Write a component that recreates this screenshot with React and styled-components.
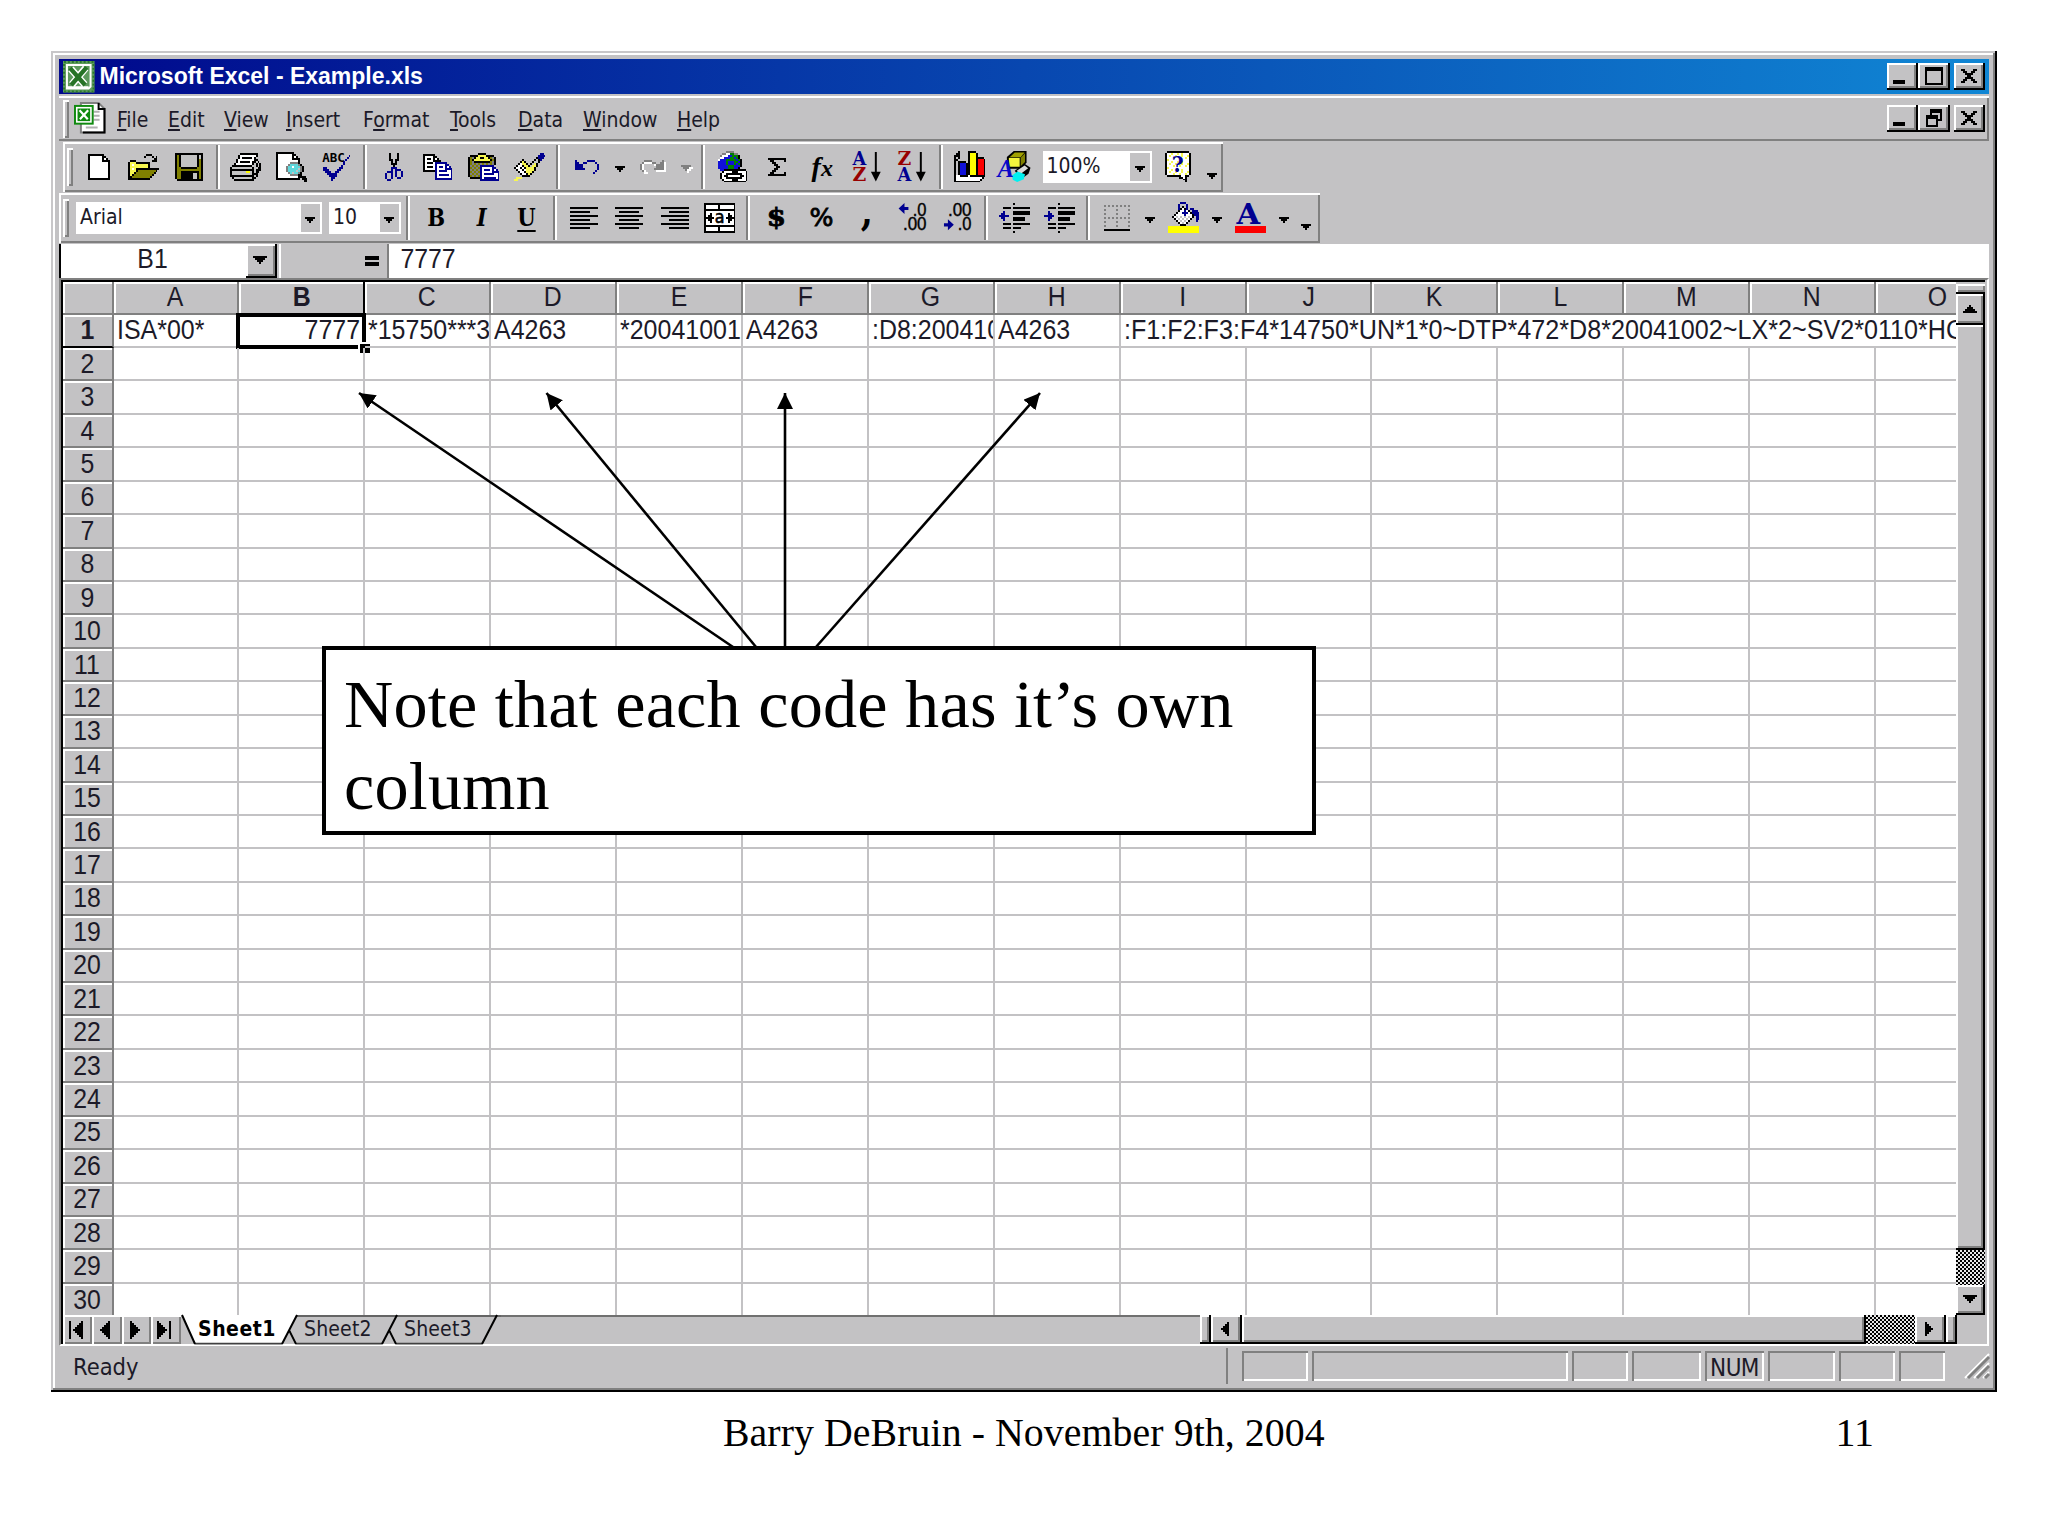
import styled, { createGlobalStyle, css } from 'styled-components';

const PX = 1.967;
const COL = 125.9;
const ROW = 33.43;

const colors = {
    k: '#000000',
    w: '#ffffff',
    y: '#f6f650',
    Y: '#ffff00',
    o: '#808000',
    b: '#000090',
    B: '#1010d8',
    g: '#008000',
    c: '#5fd8dc',
    R: '#fc0000',
    s: '#c3c3c3',
    d: '#808080',
};

const art = {
    blank: [
        'kkkkkkkk...',
        'kwwwwwwkk..',
        'kwwwwwwkwk.',
        'kwwwwwwkkkk',
        'kwwwwwwwwwk',
        'kwwwwwwwwwk',
        'kwwwwwwwwwk',
        'kwwwwwwwwwk',
        'kwwwwwwwwwk',
        'kwwwwwwwwwk',
        'kwwwwwwwwwk',
        'kwwwwwwwwwk',
        'kkkkkkkkkkk',
    ],
    open: [
        '.........kkk....',
        '........k...k.k.',
        '.............kk.',
        '.kkk........kkk.',
        'kyyykkkkkkk.....',
        'kywyyyyyyyk.....',
        'kyyyyyyyyyk.....',
        'kywykkkkkkkkkkkk',
        'kyyykoooooooook.',
        'kyykoooooooook..',
        'kykoooooooook...',
        'kkoooooooook....',
        'kkkkkkkkkkk.....',
    ],
    save: [
        'kkkkkkkkkkkkkk',
        'kokssssssssksk',
        'kokssssssssksk',
        'koksssssssskok',
        'koksssssssskok',
        'koksssssssskok',
        'koksssssssskok',
        'kookkkkkkkkook',
        'kooooooooooook',
        'kookkkkkkkkkok',
        'kookkkkkksskok',
        'kookkkkkksskok',
        'kookkkkkksskok',
        '.kkkkkkkkkkkkk',
    ],
    print: [
        '.....kkkkkkkkk..',
        '....kwwwwwwwwk..',
        '....kwkkkkkwk...',
        '...kwwwwwwwwkk..',
        '...kwkkkkkwkksk.',
        '..kwwwwwwwwksksk',
        '.kkkkkkkkkkssksk',
        'kssssssssssksskk',
        'kkkkkkkkkkkkskkk',
        'ksssssssYYskskk.',
        'ksssssssssskkk..',
        'kkkkkkkkkkkksk..',
        '.kssssssssskk...',
        '..kkkkkkkkkk....',
    ],
    preview: [
        'kkkkkkkkk.......',
        'kwwwwwwwkk......',
        'kwwwwwwwkwk.....',
        'kwwwwwwwkkkk....',
        'kwwwwwwwwwwk....',
        'kwwwwwwddddk....',
        'kwwwwwdccccdk...',
        'kwwwwdccwcccdk..',
        'kwwwwdcccccsdk..',
        'kwwwwdccccscdk..',
        'kwwwwwdcsccdk...',
        'kwwwwwwddddkk...',
        'kwwwwwwwwwwkkkk.',
        'kkkkkkkkkkkk.kkk',
        '..............kk',
    ],
    spell: [
        '................',
        '..............b.',
        '.............b..',
        '............b...',
        '...........b....',
        '...........b....',
        '..........b.....',
        '.bb......bb.....',
        '.bbb....bb......',
        '..bbb..bb.......',
        '...bbbbb........',
        '....bbbb........',
        '.....bb.........',
        '.....b..........',
    ],
    cut: [
        '..k...k..',
        '..k...k..',
        '..k...k..',
        '..kk.kk..',
        '...k.k...',
        '...kkk...',
        '....k....',
        '...bbb...',
        '...b.bbb.',
        '.bbb.b..b',
        'b..b.b..b',
        'b..b.b..b',
        'b..b..bb.',
        '.bb......',
    ],
    copy: [
        'kkkkkk..........',
        'kwwwwkk.........',
        'kwkkwkwk........',
        'kwwwwkkkk.......',
        'kwkkkwbbbbbb....',
        'kwwwwwbwwwwbb...',
        'kwkkkwbwbbwbwb..',
        'kwwwwwbwwwwbbbb.',
        'kkkkkkbwbbbbwwb.',
        '......bwwwwwwwb.',
        '......bwbbbbbwb.',
        '......bwwwwwwwb.',
        '......bbbbbbbbb.',
    ],
    paste: [
        '.....kkkk.......',
        '.kkkkyyyykkkk...',
        'kodkyykkyykodk..',
        'kokyyyyyyyykok..',
        'kodkkkkkkkkodk..',
        'kododododododk..',
        'kdododbbbbbbb...',
        'kododobwwwwwbb..',
        'kdododbwbbbwbwb.',
        'kododobwwwwwbbbb',
        'kdododbwbbbbbwwb',
        'kododobwwwwwwwwb',
        '.kkkkkbwbbbbbbwb',
        '......bbbbbbbbbb',
    ],
    brush: [
        '.............bb.',
        '............bbbb',
        '...........kbbb.',
        '....k.....kskb..',
        '...kyk...kssk...',
        '..kwyyk.ksyk....',
        '.kwwkyyksyyk....',
        'kwwkwkyyyyk.....',
        '.kwwkwyyyyk.....',
        '..kwwkyyyk......',
        '...kwwkyk.......',
        '....kkkk........',
        '.yyy............',
        'yy..............',
    ],
    undo: [
        'b.....bbbb..',
        'bb..bb....b.',
        'bbbb.......b',
        'bbbb.......b',
        'bbbbb......b',
        '..........b.',
        '.........b..',
    ],
    redo: [
        '..dddd.....d.',
        '.dwwwwdd..ddw',
        'dw.....wddddw',
        'dw......ddddw',
        'dw.....dddddw',
        '.dw.....wwwww',
        '..ww.........',
    ],
    link: [
        '.....dddd.......',
        '...ddwwggdd.....',
        '..dwwwBBgggk....',
        '..wwBBBggBgk....',
        '.wBBBgggggBgk...',
        '.BBBBgBBBggBk...',
        '.BBBBgBBBgBgk...',
        '.BBBBBgggBBBk...',
        '.BBBBBgggBBk....',
        '..BBkkkkkkkkkkk.',
        '...kwwwwkkkwwwwk',
        '..kwwkkkkkkkkwwk',
        '..kwkkwwwwwwkkwk',
        '..kwwkkkkkkkkwwk',
        '...kwwwwkkkwwwwk',
        '....kkkkkkkkkkk.',
    ],
    sum: [
        'kkkkkkkkk',
        '.kk.....k',
        '..kk.....',
        '...kk....',
        '....kk...',
        '...kk....',
        '..kk.....',
        '.kk.....k',
        'kkkkkkkkk',
    ],
    chart: [
        '..k....kkkk.....',
        '.kk....kYYYk....',
        'kkk....kYYYk....',
        'k.k....kYYYkkkk.',
        'kk.....kYYYkRRRk',
        'k.kkkk.kYYYkRRRk',
        'k.kBBBkkYYYkRRRk',
        'k.kBBBkkYYYkRRRk',
        'k.kBBBkkYYYkRRRk',
        'k.kBBBkkYYYkRRRk',
        'k.kBBBkkYYYkRRRk',
        'k.kBBBkkYYYkRRRk',
        'kwwkkkkwkkkkkkkk',
        'kwwwwwwwwwwwwwk.',
        'kwwwwwwwwwwwwk..',
        'kkkkkkkkkkkkk...',
    ],
    help: [
        '.kkkkkkkkkkk.',
        'kwwywwywywwwk',
        'kwywwywwywwyk',
        'kwwwywwywwywk',
        'kywwwwwwwwwwk',
        'kwwywwywywwwk',
        'kwywwywwywwyk',
        'kwwwywwywwywk',
        'kywwwwwwwwwwk',
        'kwwywwywywwwk',
        'kwywwywwywwyk',
        'kwwwywwywwywk',
        '.kkkkkkkwwkk.',
        '.......kkwk..',
        '.........kk..',
        '..........k..',
    ],
    left: ['kkkkkkkkkkkkkk', '', 'kkkkkkkkkk', '', 'kkkkkkkkkkkkkk', '', 'kkkkkkkkkk', '', 'kkkkkkkkkkkkkk', '', 'kkkkkkkkkk'],
    center: ['kkkkkkkkkkkkkk', '', '..kkkkkkkkkk', '', 'kkkkkkkkkkkkkk', '', '..kkkkkkkkkk', '', 'kkkkkkkkkkkkkk', '', '..kkkkkkkkkk'],
    right: ['kkkkkkkkkkkkkk', '', '....kkkkkkkkkk', '', 'kkkkkkkkkkkkkk', '', '....kkkkkkkkkk', '', 'kkkkkkkkkkkkkk', '', '....kkkkkkkkkk'],
    merge: [
        'kkkkkkkkkkkkkkkk',
        'kwwwwwwkwwwwwwwk',
        'kwwwwwwkwwwwwwwk',
        'kkkkkkkkkkkkkkkk',
        'kwwwwwwwwwwwwwwk',
        'kwwkwwwwwwwwkwwk',
        'kwkkwwwwwwwwkkwk',
        'kkkkkwwwwwwkkkkk',
        'kwkkwwwwwwwwkkwk',
        'kwwkwwwwwwwwkwwk',
        'kwwwwwwwwwwwwwwk',
        'kkkkkkkkkkkkkkkk',
        'kwwwwwwkwwwwwwwk',
        'kwwwwwwkwwwwwwwk',
        'kkkkkkkkkkkkkkkk',
    ],
    outdent: [
        '.......k........',
        '................',
        '..kkkk.kkkkkkkkk',
        '................',
        '..b....kkkkkkkkk',
        '.bb....kkkkkkkkk',
        'bbbbb...........',
        '.bb....kkkkkk...',
        '..b....kkkkkk...',
        '................',
        '..kkkk.kkkkkkkkk',
        '................',
        '..kkkk.kkkk.....',
        '................',
        '.......k........',
    ],
    indent: [
        '.......k........',
        '................',
        '..kkkk.kkkkkkkkk',
        '................',
        '..b....kkkkkkkkk',
        '..bb...kkkkkkkkk',
        'bbbbb...........',
        '..bb...kkkkkk...',
        '..b....kkkkkk...',
        '................',
        '..kkkk.kkkkkkkkk',
        '................',
        '..kkkk.kkkk.....',
        '................',
        '.......k........',
    ],
    borders: [
        'd.d.d.d.d.d.d',
        '.............',
        'd.....d.....d',
        '.............',
        'd.....d.....d',
        '.............',
        'd.d.d.d.d.d.d',
        '.............',
        'd.....d.....d',
        '.............',
        'd.....d.....d',
        '.............',
        'kkkkkkkkkkkkk',
    ],
    fill: [
        '......bbb.......',
        '.....b...b......',
        '.....b.k.b......',
        '.....bkwkb.bb...',
        '.....kwwbwk.bbb.',
        '....kwwbbbwkbbbb',
        '...kwwwwbwwwkbbb',
        '..kwswswswswk.bb',
        '...kwswswswk..bb',
        '....kwswswk...b.',
        '.....kwswk......',
        '......kkk.......',
        'YYYYYYYYYYYYYYYY',
        'YYYYYYYYYYYYYYYY',
        'YYYYYYYYYYYYYYYY',
        'YYYYYYYYYYYYYYYY',
    ],
    fontColor: [
        '................',
        '................',
        '................',
        '................',
        '................',
        '................',
        '................',
        '................',
        '................',
        '................',
        '................',
        '................',
        'RRRRRRRRRRRRRRRR',
        'RRRRRRRRRRRRRRRR',
        'RRRRRRRRRRRRRRRR',
        'RRRRRRRRRRRRRRRR',
    ],
    down: ['kkkkk', '.kkk.', '..k..'],
    downOff: ['ddddd.', '.dddww', '..dww.', '...w..'],
    bigDown: ['kkkkkkk', '.kkkkk.', '..kkk..', '...k...'],
    bigUp: ['...k...', '..kkk..', '.kkkkk.', 'kkkkkkk'],
    prev: ['...k', '..kk', '.kkk', 'kkkk', '.kkk', '..kk', '...k'],
    next: ['k...', 'kk..', 'kkk.', 'kkkk', 'kkk.', 'kk..', 'k...'],
    tabFirst: ['k.....k', 'k....kk', 'k...kkk', 'k..kkkk', 'k.kkkkk', 'k..kkkk', 'k...kkk', 'k....kk', 'k.....k'],
    tabPrev: ['....k', '...kk', '..kkk', '.kkkk', 'kkkkk', '.kkkk', '..kkk', '...kk', '....k'],
    tabNext: ['k....', 'kk...', 'kkk..', 'kkkk.', 'kkkkk', 'kkkk.', 'kkk..', 'kk...', 'k....'],
    tabLast: ['k.....k', 'kk....k', 'kkk...k', 'kkkk..k', 'kkkkk.k', 'kkkk..k', 'kkk...k', 'kk....k', 'k.....k'],
    minimize: ['.........', '', '', '', '', '', 'kkkkkk', 'kkkkkk'],
    maximize: ['kkkkkkkkk', 'kkkkkkkkk', 'k.......k', 'k.......k', 'k.......k', 'k.......k', 'k.......k', 'k.......k', 'kkkkkkkkk'],
    restore: ['..kkkkkk', '..kkkkkk', '..k....k', 'kkkkkk.k', 'kkkkkk.k', 'k....kkk', 'k....k..', 'k....k..', 'kkkkkk..'],
    close: ['kk....kk', '.kk..kk.', '..kkkk..', '...kk...', '..kkkk..', '.kk..kk.', 'kk....kk'],
};

function Pixels({ name, children }) {
    const rows = art[name];
    const w = rows[0].length;
    const h = rows.length;
    const rects = [];
    rows.forEach((row, y) => {
        let x = 0;
        while (x < row.length) {
            let end = x + 1;
            while (end < row.length && row[end] === row[x]) end++;
            if (row[x] !== '.') {
                rects.push(<rect key={`${x}-${y}`} x={x} y={y} width={end - x} height={1} fill={colors[row[x]]} />);
            }
            x = end;
        }
    });
    return (
        <Svg width={w * PX} height={h * PX} viewBox={`0 0 ${w} ${h}`}>
            <g shapeRendering="crispEdges">{rects}</g>
            {children}
        </Svg>
    );
}

function SortIcon({ first, second }) {
    const tone = { A: '#000090', Z: '#980000' };
    return (
        <Svg width={31.5} height={31.5} viewBox="0 0 16 16">
            <g fontSize="9" fontWeight="700" fontFamily="DejaVu Serif, serif">
                <text x="0.3" y="7" textLength="7" lengthAdjust="spacingAndGlyphs" fill={tone[first]}>{first}</text>
                <text x="0.3" y="15.2" textLength="7" lengthAdjust="spacingAndGlyphs" fill={tone[second]}>{second}</text>
            </g>
            <path d="M11.6 0.5h1v10h2l-2.5 5l-2.5-5h2z" fill="#000" />
        </Svg>
    );
}

function DecimalIcon({ top, bottom, add }) {
    return (
        <Svg width={31.5} height={31.5} viewBox="0 0 16 16">
            <g fontSize="9.4" fontFamily="Liberation Sans, sans-serif" fill="#000" stroke="#000" strokeWidth="0.2">
                <text x="15" y="7" textAnchor="end" textLength={add ? 7 : 12} lengthAdjust="spacingAndGlyphs">{top}</text>
                <text x="15" y="14.4" textAnchor="end" textLength={add ? 12 : 7} lengthAdjust="spacingAndGlyphs">{bottom}</text>
            </g>
            {add
                ? <path d="M0.8 3.3l3-2.8v2h2v1.6h-2v2z" fill="#000090" />
                : <path d="M6 11.6l-3-2.8v2h-2v1.6h2v2z" fill="#000090" />}
        </Svg>
    );
}

function DrawingIcon() {
    return (
        <Svg width={31.5} height={31.5} viewBox="0 0 16 16">
            <path d="M4 3l3.5-3H14v6l-3 3H4z" fill="#000" />
            <path d="M5.4 3.2l2.6-2.4h5l-2 2.4z" fill="#a0a000" />
            <path d="M5 3.5h5.5v4.5H5z" fill="#f4f43c" />
            <path d="M11 3.4l2.2-2.2v4.4L11 7.8z" fill="#808000" />
            <path d="M8 10l5-3.5 3 2-1 3-4 3z" fill="#000" />
            <path d="M9 10l4-2.6 1.8 1.4-4 3z" fill="#d8d8d8" />
            <path d="M6.6 12.4l2.8-2 3.8 1.4-.6 2.6-3.4 1.4-2.2-1.2z" fill="#00f0f0" />
            <text x="-0.8" y="13" fontSize="12.5" fontWeight="700" fontStyle="italic" fontFamily="Liberation Serif, serif" fill="#0808c8">A</text>
        </Svg>
    );
}

function ExcelIcon() {
    return (
        <Svg width={31.5} height={31.5} viewBox="0 0 16 16">
            <rect width="16" height="16" fill="#5d9a5d" />
            <rect x="0.5" y="0.5" width="15" height="15" fill="none" stroke="#2c7a2c" strokeDasharray="1 1" />
            <path d="M2 2h12v11l-1 1H2z" fill="none" stroke="#fff" strokeWidth="1" />
            <path d="M2 13.5h11" stroke="#fff" strokeWidth="1.4" />
            <path d="M4 4l7 8M11.5 3.5L4.5 12" stroke="#fff" strokeWidth="3.6" />
            <path d="M3.6 3.6l7.6 8.6M12 3.2L4.2 12.2" stroke="#267326" strokeWidth="2.2" />
        </Svg>
    );
}

function BookIcon() {
    return (
        <Svg width={31.5} height={31.5} viewBox="0 0 16 16">
            <path d="M3.5 0.5h9l3 3v12h-12z" fill="#fff" stroke="#808080" />
            <path d="M12.5 0.5v3h3v12h-11" fill="none" stroke="#000" />
            <path d="M10 5h3M10 7h3M10 9h3M6 13h6" stroke="#b0b0b0" />
            <rect x="0" y="1.5" width="10" height="10" fill="#108a10" />
            <rect x="1" y="2.5" width="8" height="8" fill="#fff" />
            <rect x="1.8" y="3.3" width="6.4" height="6.4" fill="#108a10" />
            <path d="M2.8 4.2l4.2 4.6M7.2 4.2L3 8.8" stroke="#fff" strokeWidth="1.1" />
        </Svg>
    );
}

const menus = [
    { key: 'F', rest: 'ile', width: 51 },
    { key: 'E', rest: 'dit', width: 56 },
    { key: 'V', rest: 'iew', width: 62 },
    { key: 'I', rest: 'nsert', width: 77 },
    { pre: 'F', key: 'o', rest: 'rmat', width: 87 },
    { key: 'T', rest: 'ools', width: 68 },
    { key: 'D', rest: 'ata', width: 65 },
    { key: 'W', rest: 'indow', width: 94 },
    { key: 'H', rest: 'elp', width: 50 },
];

const columns = 'ABCDEFGHIJKLMNO'.split('');
const rowNumbers = Array.from({ length: 30 }, (_, i) => i + 1);

const firstRow = [
    { text: 'ISA*00*' },
    { text: '7777', align: 'right' },
    { text: '*15750***3' },
    { text: 'A4263' },
    { text: '*20041001' },
    { text: 'A4263' },
    { text: ':D8:200410' },
    { text: 'A4263' },
    { text: ':F1:F2:F3:F4*14750*UN*1*0~DTP*472*D8*20041002~LX*2~SV2*0110*HC', span: 7 },
];

const statusPanes = [
    { width: 66 },
    { width: 256 },
    { width: 56 },
    { width: 69 },
    { width: 59, label: 'NUM' },
    { width: 67 },
    { width: 56 },
    { width: 46 },
];

const arrows = [
    { from: [733, 647], to: [359, 393] },
    { from: [756, 647], to: [546.5, 393] },
    { from: [785, 647], to: [785, 393] },
    { from: [816, 647], to: [1040, 393] },
];

export default function App() {
    return (
        <Slide>
            <GlobalStyle />
            <Window>
                <TitleBar>
                    <ExcelIcon />
                    <Title>Microsoft Excel - Example.xls</Title>
                    <Caption>
                        <CaptionButton $low><Pixels name="minimize" /></CaptionButton>
                        <CaptionButton><Pixels name="maximize" /></CaptionButton>
                        <CaptionButton $gap><Pixels name="close" /></CaptionButton>
                    </Caption>
                </TitleBar>
                <MenuBar>
                    <Grip />
                    <MenuIcon><BookIcon /></MenuIcon>
                    {menus.map((m) => (
                        <MenuItem key={m.key} $width={m.width}>{m.pre}<u>{m.key}</u>{m.rest}</MenuItem>
                    ))}
                    <Caption>
                        <CaptionButton $low><Pixels name="minimize" /></CaptionButton>
                        <CaptionButton><Pixels name="restore" /></CaptionButton>
                        <CaptionButton $gap><Pixels name="close" /></CaptionButton>
                    </Caption>
                </MenuBar>

                <Toolbar $indent={4} $width={1160}>
                    <Grip $gap={3} />
                    <Tool><Pixels name="blank" /></Tool>
                    <Tool><Pixels name="open" /></Tool>
                    <Tool><Pixels name="save" /></Tool>
                    <Separator />
                    <Tool><Pixels name="print" /></Tool>
                    <Tool><Pixels name="preview" /></Tool>
                    <Tool>
                        <Pixels name="spell">
                            <text x="0.6" y="4.6" fontSize="6" fontWeight="700" fontFamily="DejaVu Sans Mono, monospace" textLength="11.5" lengthAdjust="spacingAndGlyphs">ABC</text>
                        </Pixels>
                    </Tool>
                    <Separator />
                    <Tool><Pixels name="cut" /></Tool>
                    <Tool><Pixels name="copy" /></Tool>
                    <Tool><Pixels name="paste" /></Tool>
                    <Tool><Pixels name="brush" /></Tool>
                    <Separator />
                    <Tool><Pixels name="undo" /></Tool>
                    <Drop><Pixels name="down" /></Drop>
                    <Tool><Pixels name="redo" /></Tool>
                    <Drop><Pixels name="downOff" /></Drop>
                    <Separator />
                    <Tool><Pixels name="link" /></Tool>
                    <Tool><Pixels name="sum" /></Tool>
                    <Tool><Fx>f<small>x</small></Fx></Tool>
                    <Tool><SortIcon first="A" second="Z" /></Tool>
                    <Tool><SortIcon first="Z" second="A" /></Tool>
                    <Separator />
                    <Tool><Pixels name="chart" /></Tool>
                    <Tool><DrawingIcon /></Tool>
                    <Combo $width={109} $left={5} $right={4}>
                        <span>100%</span>
                        <ComboButton><Pixels name="down" /></ComboButton>
                    </Combo>
                    <Tool>
                        <Pixels name="help">
                            <text x="6.5" y="10.8" textAnchor="middle" fontSize="11.5" fontWeight="700" fontFamily="DejaVu Serif, serif" fill="#000090">?</text>
                        </Pixels>
                    </Tool>
                    <Drop $more><Pixels name="down" /></Drop>
                </Toolbar>

                <Toolbar $width={1261}>
                    <Grip $gap={7} />
                    <Combo $width={246}>
                        <span>Arial</span>
                        <ComboButton><Pixels name="down" /></ComboButton>
                    </Combo>
                    <Combo $width={72} $left={7} $right={1}>
                        <span>10</span>
                        <ComboButton><Pixels name="down" /></ComboButton>
                    </Combo>
                    <Separator />
                    <Tool><Letter>B</Letter></Tool>
                    <Tool><Letter $italic>I</Letter></Tool>
                    <Tool><Letter $line>U</Letter></Tool>
                    <Separator />
                    <Tool><Pixels name="left" /></Tool>
                    <Tool><Pixels name="center" /></Tool>
                    <Tool><Pixels name="right" /></Tool>
                    <Tool>
                        <Pixels name="merge">
                            <text x="8" y="10.3" textAnchor="middle" fontSize="9" fontFamily="DejaVu Sans, sans-serif" stroke="#000" strokeWidth="0.3">a</text>
                        </Pixels>
                    </Tool>
                    <Separator />
                    <Tool><Letter $wide>$</Letter></Tool>
                    <Tool><Letter $percent>%</Letter></Tool>
                    <Tool><Letter $big>,</Letter></Tool>
                    <Tool><DecimalIcon top=".0" bottom=".00" add /></Tool>
                    <Tool><DecimalIcon top=".00" bottom=".0" /></Tool>
                    <Separator />
                    <Tool><Pixels name="outdent" /></Tool>
                    <Tool><Pixels name="indent" /></Tool>
                    <Separator />
                    <Tool><Pixels name="borders" /></Tool>
                    <Drop><Pixels name="down" /></Drop>
                    <Tool><Pixels name="fill" /></Tool>
                    <Drop><Pixels name="down" /></Drop>
                    <Tool>
                        <Pixels name="fontColor">
                            <text x="6.8" y="11" textAnchor="middle" fontSize="14.5" fontWeight="700" fontFamily="DejaVu Serif, serif" textLength="12" lengthAdjust="spacingAndGlyphs" fill="#000090">A</text>
                        </Pixels>
                    </Tool>
                    <Drop><Pixels name="down" /></Drop>
                    <Drop $more><Pixels name="down" /></Drop>
                </Toolbar>

                <FormulaBar>
                    <NameBox><Narrow>B1</Narrow></NameBox>
                    <NameButton><Pixels name="bigDown" /></NameButton>
                    <FormulaGap><EqualSign /></FormulaGap>
                    <FormulaText><Narrow>7777</Narrow></FormulaText>
                </FormulaBar>

                <Workbook>
                    <SheetArea>
                        <Sheet>
                            <Row $head>
                                <RowHead />
                                {columns.map((c) => (
                                    <ColHead key={c} $active={c === 'B'}><Narrow>{c}</Narrow></ColHead>
                                ))}
                            </Row>
                            {rowNumbers.map((n) => (
                                <Row key={n}>
                                    <RowHead $active={n === 1}><Narrow>{n}</Narrow></RowHead>
                                    {n === 1
                                        ? firstRow.map((cell, idx) => (
                                            <Cell key={idx} $span={cell.span} $align={cell.align}>
                                                <Clip>
                                                    <Narrow $origin={cell.align || 'left'} $scale={cell.span ? 0.931 : 0.925}>{cell.text}</Narrow>
                                                </Clip>
                                                {idx === 1 && <Selection><Handle /></Selection>}
                                            </Cell>
                                        ))
                                        : columns.map((c) => <Cell key={c} />)}
                                </Row>
                            ))}
                        </Sheet>
                        <VScroll>
                            <SplitBox />
                            <ScrollButton $h={31}><Pixels name="bigUp" /></ScrollButton>
                            <Thumb />
                            <Track $h={35} />
                            <ScrollButton $h={30}><Pixels name="bigDown" /></ScrollButton>
                        </VScroll>
                    </SheetArea>
                    <TabRow>
                        {['tabFirst', 'tabPrev', 'tabNext', 'tabLast'].map((n) => (
                            <TabButton key={n}><Pixels name={n} /></TabButton>
                        ))}
                        <Tabs>
                            <TabShape width="320" height="30" viewBox="0 0 320 30">
                                <path d="M0 0L14 29H102L116 0Z" fill="#fff" />
                                <path d="M108 15l7 14M208 15l7 14" stroke="#fff" strokeWidth="2" />
                                <path d="M116 1H320" stroke="#606060" strokeWidth="1.6" />
                                <path d="M14 28.6H101M115 28.6H201M215 28.6H301" stroke="#404040" strokeWidth="1.6" />
                                <path d="M1 0L14 29M101 29L116 0M108 15L115 29M201 29L216 0M208 15L215 29M301 29L316 0" fill="none" stroke="#000" strokeWidth="2" />
                            </TabShape>
                            <TabLabel $width={106} $active>Sheet1</TabLabel>
                            <TabLabel $width={100}>Sheet2</TabLabel>
                            <TabLabel $width={90}>Sheet3</TabLabel>
                        </Tabs>
                        <HScroll>
                            <HSplit $w={11} />
                            <ScrollButton $w={31}><Pixels name="prev" /></ScrollButton>
                            <Thumb />
                            <Track $w={49} />
                            <ScrollButton $w={31}><Pixels name="next" /></ScrollButton>
                            <HSplit $w={11} />
                        </HScroll>
                    </TabRow>
                </Workbook>

                <StatusBar>
                    <Ready>Ready</Ready>
                    <Panes>
                        {statusPanes.map((p, idx) => (
                            <Pane key={idx} $width={p.width}>{p.label}</Pane>
                        ))}
                    </Panes>
                    <Svg width="25" height="25" viewBox="0 0 25 25">
                        <path d="M1 25L25 1M10 25L25 10M19 25L25 19" stroke="#fff" strokeWidth="2" />
                        <path d="M4 25L25 4M13 25L25 13M21 25l4-4" stroke="#808080" strokeWidth="3" />
                    </Svg>
                </StatusBar>
            </Window>

            <Arrows width="2048" height="1536" viewBox="0 0 2048 1536">
                <defs>
                    <marker id="head" markerUnits="userSpaceOnUse" markerWidth="17" markerHeight="17" refX="16" refY="8" orient="auto">
                        <path d="M0 0L16 8L0 16Z" />
                    </marker>
                </defs>
                {arrows.map(({ from, to }) => (
                    <line key={to[0]} x1={from[0]} y1={from[1]} x2={to[0]} y2={to[1]} stroke="#000" strokeWidth="2.6" markerEnd="url(#head)" />
                ))}
            </Arrows>
            <Note>Note that each code has it’s own column</Note>

            <Footer>
                <span>Barry DeBruin - November 9th, 2004</span>
                <span>11</span>
            </Footer>
        </Slide>
    );
}

const GlobalStyle = createGlobalStyle`
    * {
        box-sizing: border-box;
    }
    body {
        margin: 0;
        background: #ffffff;
    }
`

const face = '#c3c2c4';
const uiFont = '"DejaVu Sans Condensed", "DejaVu Sans", sans-serif';

const raised = css`
    background: ${face};
    box-shadow: inset -2px -2px 0 #000, inset 2px 2px 0 #fff, inset -4px -4px 0 #808080;
`

const Svg = styled.svg`
    display: block;
    flex: none;
    overflow: visible;
`

const Slide = styled.div`
    position: relative;
    width: 2048px;
    height: 1536px;
    padding: 51px 0 0 51px;
    background: #fff;
    overflow: hidden;
`

const Window = styled.div`
    display: flex;
    flex-direction: column;
    width: 1946px;
    height: 1341px;
    padding: 8px 8px 4px;
    background: ${face};
    font-family: ${uiFont};
    font-stretch: condensed;
    color: #1c1a28;
    box-shadow: inset -2px -2px 0 #000, inset 2px 2px 0 #c8c7c9, inset -4px -4px 0 #808080, inset 4px 4px 0 #fff;
`

const TitleBar = styled.div`
    display: flex;
    align-items: center;
    height: 35px;
    padding: 0 4px;
    background: linear-gradient(90deg, #00088c, #1086d4);
`

const Title = styled.div`
    margin-left: 5px;
    font-family: "Liberation Sans", sans-serif;
    font-size: 23px;
    font-weight: 700;
    color: #fff;
`

const Caption = styled.div`
    display: flex;
    margin-left: auto;
`

const CaptionButton = styled.div`
    display: flex;
    align-items: ${(p) => (p.$low ? 'flex-end' : 'center')};
    justify-content: center;
    width: 31.4px;
    height: 27px;
    padding-bottom: ${(p) => (p.$low ? 6 : 2)}px;
    padding-right: 1px;
    margin-left: ${(p) => (p.$gap ? 4 : 0)}px;
    ${raised}
`

const MenuBar = styled.div`
    display: flex;
    align-items: center;
    height: 45px;
    margin-top: 2px;
    padding: 0 4px;
    box-shadow: inset 0 2px 0 #fff, inset -2px -2px 0 #808080;
`

const Grip = styled.div`
    width: 6px;
    height: 38px;
    margin: 0 ${(p) => p.$gap || 0}px 0 0;
    flex: none;
    box-shadow: inset 2px 2px 0 #fff, inset -2px -2px 0 #808080;
`

const MenuIcon = styled.div`
    width: 48px;
    padding-left: 5px;
    margin-top: -2px;
`

const MenuItem = styled.div`
    width: ${(p) => p.$width}px;
    margin-top: 2px;
    font-size: 21px;
    white-space: nowrap;

    u {
        text-underline-offset: 2px;
        text-decoration-thickness: 2px;
        text-decoration-skip-ink: none;
    }
`

const Toolbar = styled.div`
    display: flex;
    align-items: center;
    width: ${(p) => p.$width}px;
    height: 50px;
    margin: 1px 0 0 ${(p) => p.$indent || 0}px;
    padding-left: 4px;
    flex: none;
    box-shadow: inset 2px 2px 0 #fff, inset -2px -2px 0 #808080;
`

const Tool = styled.div`
    display: flex;
    align-items: center;
    justify-content: center;
    width: 45.24px;
    height: 45px;
    flex: none;
`

const Drop = styled.div`
    display: flex;
    justify-content: center;
    width: 21.6px;
    padding-top: ${(p) => (p.$more ? 17 : 3)}px;
    flex: none;
`

const Separator = styled.div`
    width: 4px;
    height: 44px;
    margin: 0 3.9px;
    flex: none;
    border-left: 2px solid #808080;
    border-right: 2px solid #fff;
`

const Letter = styled.span`
    font-family: "DejaVu Serif", serif;
    font-stretch: normal;
    font-size: ${(p) => (p.$big ? 40 : 24)}px;
    line-height: 24px;
    font-weight: 700;
    color: #000;
    transform: scaleX(0.88);
    margin-top: ${(p) => (p.$big ? -14 : 0)}px;
    ${(p) => p.$wide && 'transform: scaleX(1.15); -webkit-text-stroke: 0.8px #000;'}
    ${(p) => p.$percent && 'transform: scaleX(1.05); font-family: "DejaVu Sans"; font-weight: 400; -webkit-text-stroke: 0.8px #000;'}
    ${(p) => p.$italic && 'font-style: italic;'}
    ${(p) => p.$line && 'text-decoration: underline; text-underline-offset: 4px; text-decoration-thickness: 2px;'}
`

const Fx = styled.span`
    font-family: "Liberation Serif", serif;
    font-style: italic;
    font-weight: 700;
    font-size: 28px;
    line-height: 30px;
    color: #000;

    small {
        font-size: 24px;
    }
`

const Combo = styled.div`
    display: flex;
    align-items: center;
    justify-content: space-between;
    width: ${(p) => p.$width}px;
    height: 32px;
    padding: 2px 2px 2px 4px;
    margin: 0 ${(p) => p.$right || 0}px 0 ${(p) => p.$left || 0}px;
    flex: none;
    background: #fff;
    font-size: 21px;
    line-height: 24px;

    span {
        margin-top: -3px;
    }
`

const ComboButton = styled.div`
    display: flex;
    align-items: center;
    justify-content: center;
    width: 19.5px;
    height: 28px;
    padding-top: 3px;
    background: ${face};
`

const FormulaBar = styled.div`
    display: flex;
    height: 34px;
    flex: none;
    background: #fff;
    border-left: 2px solid #000;
    margin-top: 1px;
`

const Narrow = styled.span`
    display: inline-block;
    font-family: "Liberation Sans", Arial, sans-serif;
    font-stretch: normal;
    font-size: 27px;
    line-height: 30px;
    transform: scaleX(${(p) => p.$scale || 0.92});
    transform-origin: ${(p) => p.$origin || 'center'};
    white-space: nowrap;
`

const NameBox = styled.div`
    width: 185px;
    padding-right: 2px;
    text-align: center;
`

const NameButton = styled.div`
    display: flex;
    align-items: center;
    justify-content: center;
    width: 31px;
    padding: 0 3px 2px 0;
    ${raised}
`

const FormulaGap = styled.div`
    display: flex;
    align-items: center;
    justify-content: flex-end;
    width: 112px;
    padding-right: 8px;
    background: ${face};
    border-right: 2px solid #808080;
    box-shadow: inset 2px 0 0 ${face}, inset 4px 0 0 #fff;
`

const EqualSign = styled.div`
    width: 14px;
    height: 10px;
    border-top: 4px solid #000;
    border-bottom: 4px solid #000;
`

const FormulaText = styled.div`
    padding-left: 9px;
`

const Workbook = styled.div`
    display: flex;
    flex-direction: column;
    height: 1068px;
    flex: none;
    border-top: 2px solid #808080;
    border-left: 2px solid #808080;
    border-right: 2px solid #fff;
    border-bottom: 2px solid #fff;
`

const SheetArea = styled.div`
    display: flex;
    width: 1924px;
    height: 1035px;
    flex: none;
    border-top: 2px solid #000;
    border-left: 2px solid #000;
`

const Sheet = styled.div`
    width: 1893px;
    overflow: hidden;
    background: #fff;
`

const Row = styled.div`
    display: flex;
    width: max-content;
    height: ${(p) => (p.$head ? 32.6 : ROW)}px;
`

const headBase = css`
    display: flex;
    align-items: center;
    justify-content: center;
    flex: none;
    background: ${face};
    border-right: 2px solid #808080;
    border-bottom: 2px solid #808080;
    box-shadow: inset 2px 2px 0 #fff;
`

const RowHead = styled.div`
    ${headBase}
    width: 50.5px;
    ${(p) => p.$active && 'font-weight: 700; border-bottom-color: #000;'}
`

const ColHead = styled.div`
    ${headBase}
    width: ${COL}px;
    ${(p) => p.$active && 'font-weight: 700; border-right-color: #000;'}
`

const Cell = styled.div`
    position: relative;
    width: ${(p) => COL * (p.$span || 1)}px;
    flex: none;
    text-align: ${(p) => p.$align || 'left'};
    border-right: 2px solid ${face};
    border-bottom: 2px solid ${face};
`

const Clip = styled.div`
    height: 31px;
    padding: 0 3px;
    overflow: hidden;
`

const Selection = styled.div`
    position: absolute;
    top: -2px;
    left: -3px;
    width: 130px;
    height: 36px;
    border: 4px solid #000;
`

const Handle = styled.div`
    position: absolute;
    right: -8px;
    bottom: -8px;
    width: 12px;
    height: 11px;
    background: #000;
    border: solid #fff;
    border-width: 2px 0 0 2px;
`

const VScroll = styled.div`
    display: flex;
    flex-direction: column;
    width: 29px;
`

const SplitBox = styled.div`
    height: 12px;
    flex: none;
    background: ${face};
    border-top: 2px solid ${face};
    border-bottom: 2px solid #000;
    box-shadow: inset 2px 2px 0 #fff, inset -2px -2px 0 #808080;
`

const ScrollButton = styled.div`
    display: flex;
    align-items: center;
    justify-content: center;
    height: ${(p) => (p.$h ? `${p.$h}px` : '100%')};
    width: ${(p) => (p.$w ? `${p.$w}px` : '100%')};
    padding: 0 ${(p) => (p.$w ? 4 : 2)}px 2px 0;
    flex: none;
    ${raised}
`

const Thumb = styled.div`
    flex: 1;
    ${raised}
`

const Track = styled.div`
    height: ${(p) => (p.$h ? `${p.$h}px` : '100%')};
    width: ${(p) => (p.$w ? `${p.$w}px` : '100%')};
    flex: none;
    background: repeating-conic-gradient(#000 0 25%, #e6e6e6 0 50%) 0 0 / 4px 4px;
`

const TabRow = styled.div`
    display: flex;
    height: 29px;
    flex: none;
    border-left: 2px solid #000;
`

const TabButton = styled.div`
    display: flex;
    align-items: center;
    justify-content: center;
    width: 29.4px;
    padding-right: 4px;
    flex: none;
    box-shadow: inset 2px 2px 0 #fff, inset -2px -2px 0 #808080;
`

const Tabs = styled.div`
    position: relative;
    display: flex;
    width: 1019.5px;
    padding-left: 17.5px;
    flex: none;
    background: linear-gradient(#707070, #707070) 116px 0 / 100% 2px no-repeat;
`

const TabShape = styled(Svg)`
    position: absolute;
    top: 0;
    left: 0;
`

const TabLabel = styled.div`
    position: relative;
    width: ${(p) => p.$width}px;
    font-size: 21px;
    line-height: 29px;
    letter-spacing: 0.15px;
    ${(p) => p.$active && 'font-weight: 700; letter-spacing: 0.5px; color: #000;'}
`

const HScroll = styled.div`
    display: flex;
    flex: none;
    width: 757px;
`

const HSplit = styled.div`
    width: ${(p) => p.$w}px;
    flex: none;
    ${raised}
`

const StatusBar = styled.div`
    display: flex;
    align-items: center;
    flex: 1;
    padding-left: 14px;
    padding-bottom: 3px;
`

const Ready = styled.div`
    width: 1156px;
    height: 36px;
    line-height: 39px;
    font-size: 23.5px;
    border-right: 2px solid #808080;
`

const Panes = styled.div`
    display: flex;
    gap: 4px;
    width: 702px;
    margin: 0 20px 0 14px;
    flex: none;
`

const Pane = styled.div`
    width: ${(p) => p.$width}px;
    height: 30px;
    line-height: 34px;
    font-size: 24px;
    text-align: center;
    letter-spacing: -0.6px;
    flex: none;
    box-shadow: inset 2px 2px 0 #808080, inset -2px -2px 0 #fff;
`

const Arrows = styled(Svg)`
    position: absolute;
    top: 0;
    left: 0;
`

const Note = styled.div`
    position: absolute;
    top: 646px;
    left: 322px;
    width: 994px;
    height: 189px;
    padding: 13px 18px;
    background: #fff;
    border: 4px solid #000;
    font-family: "Liberation Serif", "Times New Roman", serif;
    font-size: 68.27px;
    line-height: 82px;
    letter-spacing: 0.2px;
    color: #000;
`

const Footer = styled.div`
    display: flex;
    justify-content: space-between;
    width: 1151px;
    margin: 18px 0 0 672px;
    font-family: "Liberation Serif", "Times New Roman", serif;
    font-size: 39.8px;
    line-height: 46px;
    letter-spacing: 0.08px;
    color: #000;
`
